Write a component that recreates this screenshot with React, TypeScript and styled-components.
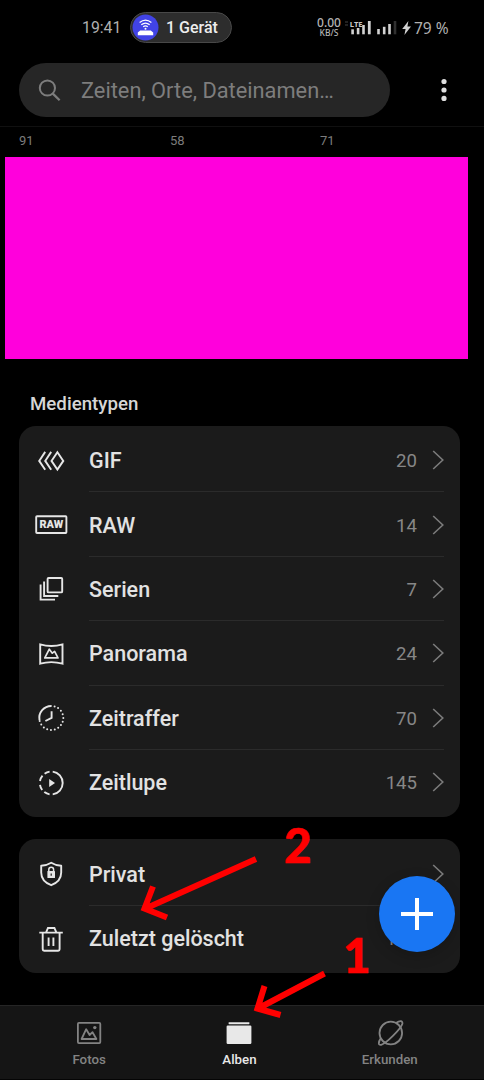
import React from "react";
import styled, { createGlobalStyle } from "styled-components";

const GlobalStyle = createGlobalStyle`
  * { box-sizing: border-box; }
  body { margin: 0; background: #000; }
`;

const Screen = styled.div`
  position: relative;
  width: 484px;
  height: 1080px;
  display: flex;
  flex-direction: column;
  overflow: hidden;
  background: #000;
  color: #e2e2e2;
  font-family: Roboto, "Noto Sans", sans-serif;
`;

const StatusBar = styled.header`
  height: 55px;
  flex: none;
  display: flex;
  align-items: center;
  padding-left: 82px;
`;

const Clock = styled.span`
  width: 48px;
  padding-top: 1px;
  font-size: 15.8px;
  line-height: 20px;
  color: #b0b0b0;
`;

const DevicePill = styled.div`
  width: 102px;
  height: 31px;
  display: flex;
  align-items: center;
  gap: 7px;
  padding-left: 1px;
  border: 1px solid #484848;
  border-radius: 16px;
  background: #2d2d2d;
  color: #ededed;
  font-size: 16px;
  font-weight: 500;
  white-space: nowrap;
`;

const NetSpeed = styled.div`
  width: 26px;
  margin-left: 84px;
  display: flex;
  flex-direction: column;
  align-items: center;
  color: #b4b4b4;
  font-family: "Noto Sans", sans-serif;
  font-weight: 500;
`;

const SpeedValue = styled.span`
  font-size: 12px;
  line-height: 10px;
`;

const SpeedUnit = styled.span`
  font-size: 8.5px;
  line-height: 9px;
`;

const Signals = styled.svg`
  flex: none;
  margin-left: 3px;
`;

const Battery = styled.span`
  margin-left: 2px;
  font-family: "Noto Sans", sans-serif;
  font-size: 15.5px;
  line-height: 20px;
  color: #b0b0b0;
  white-space: nowrap;
`;

const SearchRow = styled.div`
  height: 72px;
  flex: none;
  display: flex;
  align-items: flex-start;
  padding: 8px 0 0 19px;
  border-bottom: 1px solid #101010;
`;

const SearchField = styled.div`
  width: 371px;
  height: 54px;
  display: flex;
  align-items: center;
  gap: 19px;
  padding: 1px 0 0 18px;
  border-radius: 27px;
  background: #262626;
  color: #7d7d7d;
  font-size: 21.8px;
  white-space: nowrap;
`;

const MenuDots = styled.svg`
  margin: 12px 0 0 39px;
`;

const AlbumCounts = styled.div`
  height: 30px;
  flex: none;
  display: grid;
  grid-template-columns: 151px 150px 1fr;
  padding: 5px 0 0 19px;
  font-size: 13px;
  line-height: 18px;
  color: #7c7c7c;
`;

const Banner = styled.div`
  width: 463px;
  height: 201.5px;
  flex: none;
  margin-left: 5px;
  background: #ff00dc;
`;

const SectionTitle = styled.h2`
  height: 67px;
  flex: none;
  margin: 0;
  padding: 34px 0 0 30px;
  font-size: 18.7px;
  line-height: 22px;
  font-weight: 500;
  color: #d6d6d6;
`;

const Card = styled.section`
  width: 441px;
  flex: none;
  margin: 0 0 22px 19px;
  padding: 2.6px 16px 2.6px 14px;
  border-radius: 17px;
  background: #1b1b1b;
`;

const Row = styled.div`
  height: 64.4px;
  display: flex;
`;

const RowIcon = styled.svg`
  flex: none;
  margin-top: 14.6px;
  fill: none;
  stroke: #e6e6e6;
  stroke-width: 1.9;
`;

const RowBody = styled.div<{ $divided?: boolean }>`
  flex: 1;
  display: flex;
  align-items: center;
  margin-left: 20px;
  padding-top: 1px;
  border-bottom: 1px solid ${(p) => (p.$divided ? "#2b2b2b" : "transparent")};
`;

const RowLabel = styled.span`
  flex: 1;
  padding-top: 2px;
  font-size: 21.5px;
  line-height: 26px;
  font-weight: 500;
`;

const RowCount = styled.span`
  margin-right: 15px;
  padding-top: 2px;
  font-size: 18.6px;
  line-height: 24px;
  color: #878787;
`;

const Chevron = () => (
  <svg width="12" height="20" viewBox="0 0 12 20" fill="none" stroke="#7b7b7b" strokeWidth="1.6">
    <path d="M1.2 1 L10.8 10 L1.2 19" />
  </svg>
);

const NavBar = styled.nav`
  height: 75px;
  flex: none;
  margin-top: auto;
  display: grid;
  grid-template-columns: repeat(3, 150.3px);
  padding-left: 14px;
  border-top: 1px solid #252525;
  border-bottom: 1px solid #050505;
  background: #151515;
`;

const NavItem = styled.div<{ $active?: boolean }>`
  display: flex;
  flex-direction: column;
  align-items: center;
  padding-top: 9px;
  color: ${(p) => (p.$active ? "#e8e8e8" : "#838383")};
  font-size: 13.3px;
  line-height: 18px;
  font-weight: 500;
`;

const Fab = styled.button`
  position: absolute;
  left: 379px;
  top: 875.5px;
  width: 76px;
  height: 76px;
  display: grid;
  place-items: center;
  padding: 0;
  border: 0;
  border-radius: 50%;
  background: #1976f3;
  box-shadow: 0 4px 14px rgba(0, 0, 0, 0.18);
`;

const Annotations = styled.svg`
  position: absolute;
  left: 0;
  top: 0;
  pointer-events: none;
`;

const DIAL_DOTS = Array.from({ length: 14 }, (_, i) => {
  const a = ((-74 + i * 18.4) * Math.PI) / 180;
  return { x: 18.3 + 12 * Math.cos(a), y: 18 + 12 * Math.sin(a) };
});

const icons = {
  gif: (
    <path d="M12.2 8.9 L6.2 17.9 L12.2 26.8 M18.2 8.9 L12.2 17.9 L18.2 26.8 M24.4 9.2 L30.3 17.9 L24.4 26.6 L18.5 17.9 Z" />
  ),
  raw: (
    <>
      <rect x="3.2" y="9.2" width="30.2" height="16.8" rx="0.8" />
      <text
        x="6.4"
        y="21.4"
        fontSize="10.3"
        fontWeight="900"
        fill="#e6e6e6"
        stroke="none"
        textLength="23.8"
        lengthAdjust="spacingAndGlyphs"
      >
        RAW
      </text>
    </>
  ),
  burst: (
    <>
      <rect x="14.6" y="7" width="14.6" height="14.4" rx="1" />
      <path d="M11.1 10.4 V25 H25.3 M7.6 13.6 V28.6 H22" />
    </>
  ),
  panorama: (
    <>
      <path d="M7.2 8.4 Q18.3 11.6 29.5 8.4 V27.7 Q18.3 24.5 7.2 27.7 Z" />
      <path d="M11.8 21.9 L16.3 13.2 L19.3 17.2 L21.6 15.4 L25 21.9 Z" strokeWidth="1.7" strokeLinejoin="round" />
    </>
  ),
  timelapse: (
    <>
      <path d="M6.5 20.2 A12 12 0 0 1 18.6 6" />
      <path d="M18.6 11.3 V17.8 L12.4 21" />
      {DIAL_DOTS.map((d) => (
        <circle key={`${d.x}`} cx={d.x} cy={d.y} r="1" fill="#e6e6e6" stroke="none" />
      ))}
    </>
  ),
  slowmo: (
    <>
      <path d="M19.7 6.6 A11.5 11.5 0 0 1 19.7 29.4" />
      <path d="M16.6 6.6 A11.5 11.5 0 0 0 11.6 8.7 M9.5 10.6 A11.5 11.5 0 0 0 7 16 M7 19.8 A11.5 11.5 0 0 0 9.2 25 M11.3 27.1 A11.5 11.5 0 0 0 16.6 29.4" />
      <path d="M16.2 14 L22 18 L16.2 22 Z" fill="#e6e6e6" stroke="none" />
    </>
  ),
  shield: (
    <>
      <path d="M18.2 6.8 C21.4 8.8 24.6 9.5 28.2 9.7 V16.5 C28.2 22.6 24.4 26.8 18.2 29.2 C12 26.8 8.2 22.6 8.2 16.5 V9.7 C11.8 9.5 15 8.8 18.2 6.8 Z" strokeLinejoin="round" />
      <rect x="14.4" y="15" width="7.6" height="7" rx="0.6" fill="#e6e6e6" stroke="none" />
      <path d="M15.8 15.4 V13.6 A2.4 2.4 0 0 1 20.6 13.6 V15.4" strokeWidth="1.5" />
      <path d="M18.2 17.4 V19.8" stroke="#1b1b1b" strokeWidth="1.2" />
    </>
  ),
  trash: (
    <path d="M6.3 11.6 H29.8 M13.2 11.2 L15 7 H21.4 L23.2 11.2 M9.7 11.6 V28.3 Q9.7 29.7 11.1 29.7 H25.2 Q26.6 29.7 26.6 28.3 V11.6 M15.6 16.6 V25 M20.4 16.6 V25" />
  ),
};

type Entry = { icon: keyof typeof icons; label: string; count?: string };

const mediaTypes: Entry[] = [
  { icon: "gif", label: "GIF", count: "20" },
  { icon: "raw", label: "RAW", count: "14" },
  { icon: "burst", label: "Serien", count: "7" },
  { icon: "panorama", label: "Panorama", count: "24" },
  { icon: "timelapse", label: "Zeitraffer", count: "70" },
  { icon: "slowmo", label: "Zeitlupe", count: "145" },
];

const otherAlbums: Entry[] = [
  { icon: "shield", label: "Privat" },
  { icon: "trash", label: "Zuletzt gelöscht", count: "176" },
];

const List = ({ entries }: { entries: Entry[] }) => (
  <Card>
    {entries.map((e, i) => (
      <Row key={e.label}>
        <RowIcon width="36" height="36" viewBox="0 0 36 36">
          {icons[e.icon]}
        </RowIcon>
        <RowBody $divided={i < entries.length - 1}>
          <RowLabel>{e.label}</RowLabel>
          {e.count && <RowCount>{e.count}</RowCount>}
          <Chevron />
        </RowBody>
      </Row>
    ))}
  </Card>
);

export default function App() {
  return (
    <Screen>
      <GlobalStyle />
      <StatusBar>
        <Clock>19:41</Clock>
        <DevicePill>
          <svg width="27" height="27" viewBox="0 0 27 27" fill="none" stroke="#fff" strokeWidth="1.3">
            <circle cx="13.5" cy="13.5" r="13" fill="#4143e6" stroke="none" />
            <path d="M7.6 8.6 Q13.5 3.6 19.4 8.6 M9.3 10.8 Q13.5 7.3 17.7 10.8 M11.2 12.7 Q13.5 10.9 15.8 12.7" />
            <circle cx="13.5" cy="14.8" r="1" fill="#fff" stroke="none" />
            <path d="M8.2 16.4 H18.8 L21.2 18.6 V21.2 H5.8 V18.6 Z" fill="#fff" stroke="none" />
          </svg>
          1 Gerät
        </DevicePill>
        <NetSpeed>
          <SpeedValue>0.00</SpeedValue>
          <SpeedUnit>KB/S</SpeedUnit>
        </NetSpeed>
        <Signals width="67" height="20" viewBox="345 18 67 20">
          <path d="M345 22 h3 M345 25 h3" stroke="#2c2c2c" strokeWidth="1.4" />
          <text x="349.8" y="26.6" fontSize="7.6" fontWeight="700" fill="#c8c8c8" fontFamily="Noto Sans, sans-serif">
            LTE
          </text>
          <g fill="#d2d2d2">
            <rect x="351.3" y="29.3" width="2.6" height="5" />
            <rect x="356.8" y="28" width="2.6" height="6.3" />
            <rect x="362.2" y="25" width="2.6" height="9.3" />
            <rect x="367.9" y="21" width="2.8" height="13.3" />
            <rect x="377.2" y="29" width="2.6" height="5.3" />
            <rect x="382.9" y="26.8" width="2.6" height="7.5" />
            <rect x="388.2" y="24" width="2.6" height="10.3" />
            <path d="M408.4 21 L402.2 29 H405.6 L404.4 35 L411 26.6 H407.4 Z" />
          </g>
          <rect x="393.7" y="21" width="2.6" height="13.3" fill="#303030" />
        </Signals>
        <Battery>79 %</Battery>
      </StatusBar>
      <SearchRow>
        <SearchField>
          <svg width="25" height="25" viewBox="0 0 25 25" fill="none" stroke="#7d7d7d" strokeWidth="2">
            <circle cx="10.4" cy="10" r="7.6" />
            <path d="M15.8 15.6 L22.6 22.3" strokeWidth="2.3" />
          </svg>
          Zeiten, Orte, Dateinamen…
        </SearchField>
        <MenuDots width="30" height="30" viewBox="0 0 30 30" fill="#dedede">
          <circle cx="15" cy="6.5" r="2.6" />
          <circle cx="15" cy="15" r="2.6" />
          <circle cx="15" cy="23.4" r="2.6" />
        </MenuDots>
      </SearchRow>
      <AlbumCounts>
        <span>91</span>
        <span>58</span>
        <span>71</span>
      </AlbumCounts>
      <Banner />
      <SectionTitle>Medientypen</SectionTitle>
      <List entries={mediaTypes} />
      <List entries={otherAlbums} />
      <NavBar>
        <NavItem>
          <svg width="36" height="36" viewBox="0 0 36 36" fill="none" stroke="#838383" strokeWidth="1.8" strokeLinejoin="round">
            <rect x="6.9" y="7.9" width="22.4" height="20.2" rx="1" />
            <path d="M10.6 24 L15.2 14.2 L18.6 20 L21.5 17.2 L25.4 24 Z" />
            <circle cx="23.8" cy="12.6" r="1.7" fill="#838383" stroke="none" />
          </svg>
          Fotos
        </NavItem>
        <NavItem $active>
          <svg width="36" height="36" viewBox="0 0 36 36" fill="#e8e8e8">
            <rect x="7.6" y="7.2" width="20.8" height="2" rx="0.4" />
            <rect x="5.6" y="10.6" width="24.8" height="18.4" rx="1.2" />
          </svg>
          Alben
        </NavItem>
        <NavItem>
          <svg width="36" height="36" viewBox="0 0 36 36" fill="none" stroke="#838383" strokeWidth="1.8">
            <circle cx="18.8" cy="18" r="11.3" />
            <path d="M24 8 C27.6 5.6 31 5.4 30.4 8.8 C28.8 14 14.4 28.4 9.2 29.8 C6 30.6 6.2 27 8.8 23.4" />
          </svg>
          Erkunden
        </NavItem>
      </NavBar>
      <Fab aria-label="Neues Album">
        <svg width="34" height="34" viewBox="0 0 34 34" stroke="#fff" strokeWidth="4">
          <path d="M17 1 V33 M1 17 H33" />
        </svg>
      </Fab>
      <Annotations width="484" height="1080" viewBox="0 0 484 1080" fill="none" stroke="#ff0000" strokeWidth="6">
        <path d="M256 859 L145.5 908.5 M153 886.5 L144.5 908.5 L167 917.5" />
        <path d="M324.5 973.5 L258 1008.5 M264.5 986 L257.5 1008.5 L280.5 1015" />
        <g fill="#ff0000" stroke="#ff0000" strokeWidth="0.6" fontFamily="Lato, sans-serif" fontWeight="900" fontSize="47.5">
          <text x="284" y="863">2</text>
          <text x="343" y="972.7">1</text>
        </g>
      </Annotations>
    </Screen>
  );
}
